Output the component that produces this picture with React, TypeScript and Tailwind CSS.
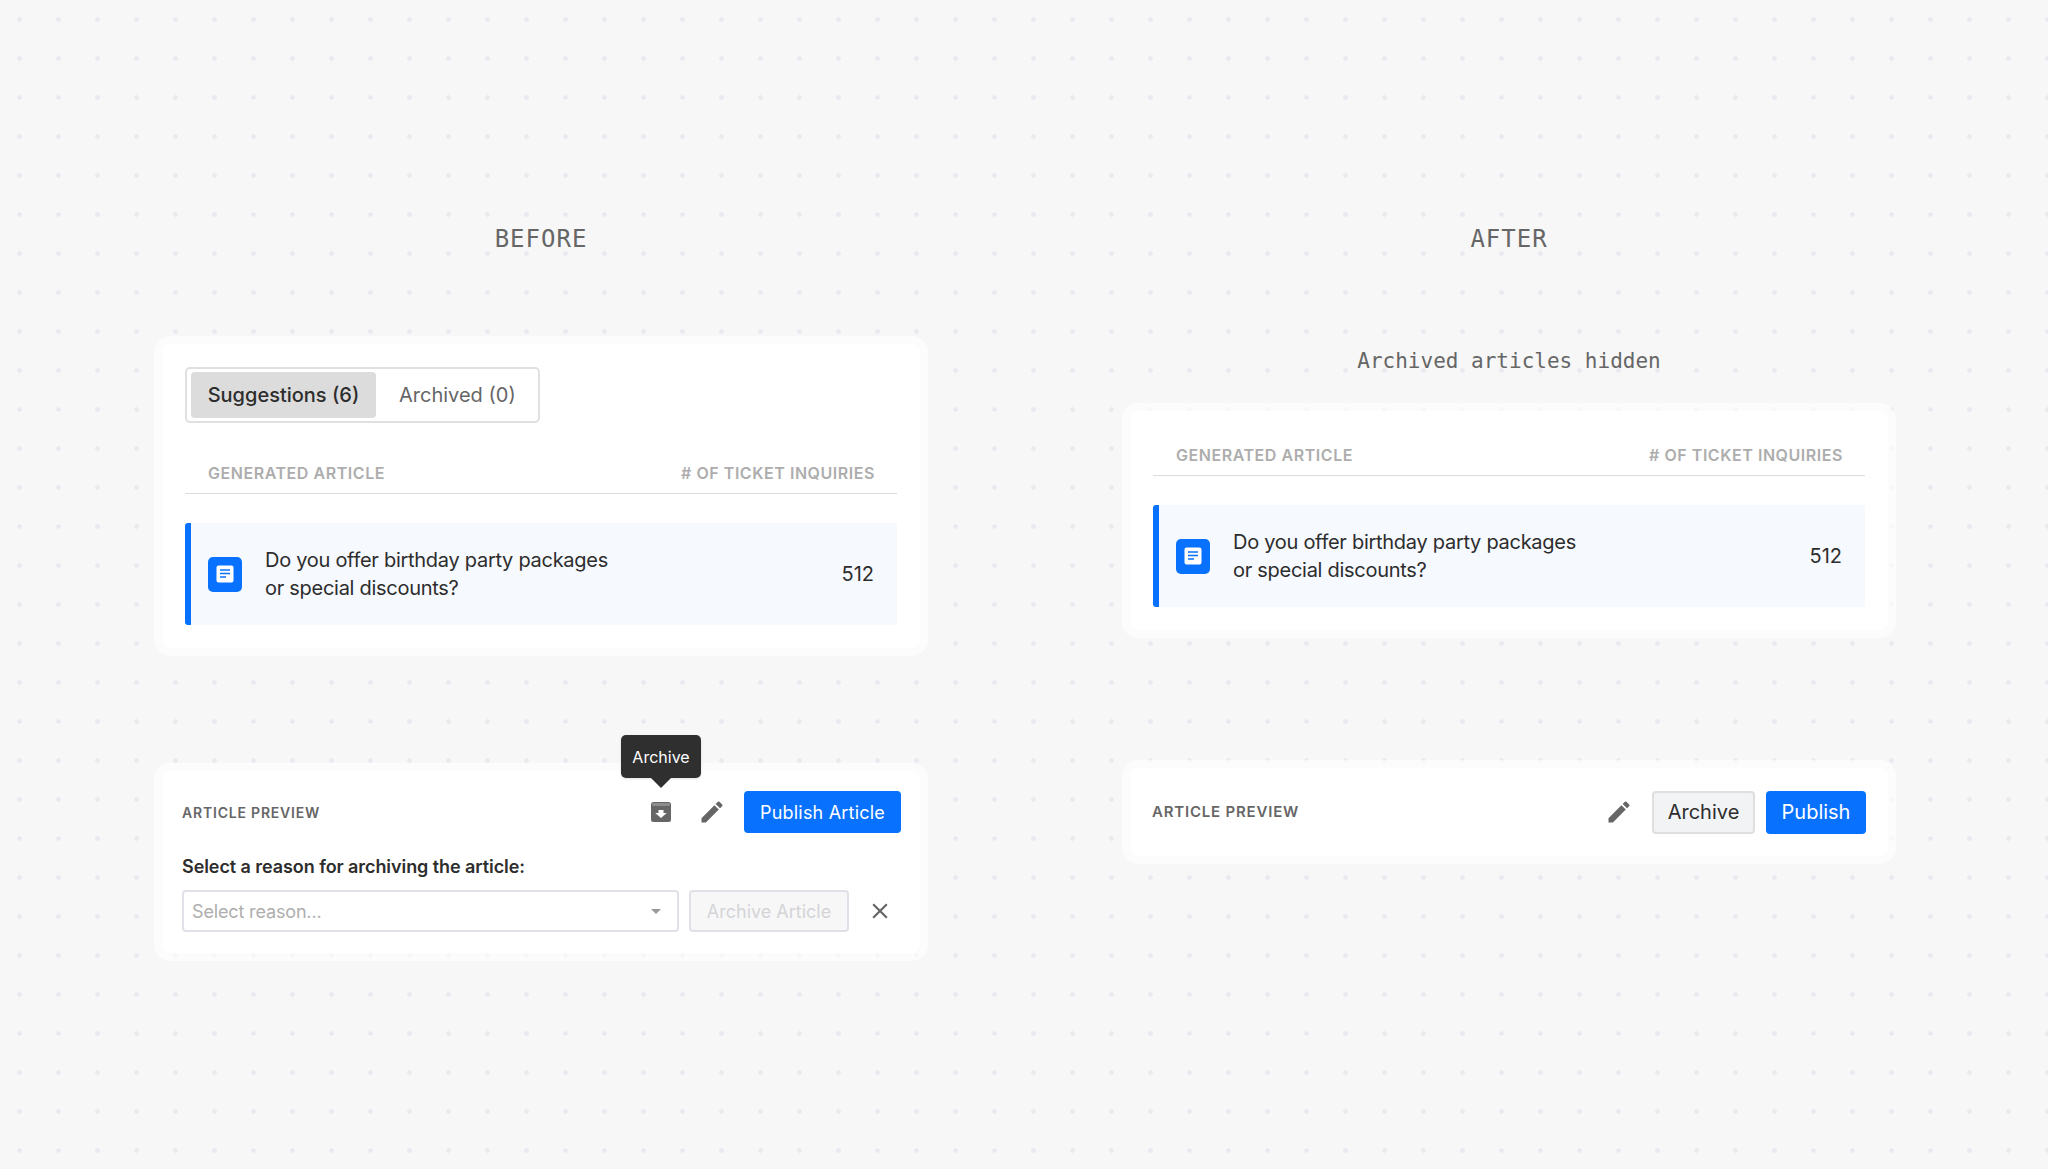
import React from 'react';
import { MdEdit, MdClose } from 'react-icons/md';

const DocIcon: React.FC = () => (
  <div className="flex h-[35px] w-[34px] shrink-0 items-center justify-center rounded-[5px] bg-[#0872ff]">
    <svg width="18" height="18" viewBox="0 0 18 18">
      <rect x="0.5" y="0.5" width="17" height="17" rx="2" fill="#fff" />
      <path d="M4 5h10M4 8.500h10M4 12h6" stroke="#0872ff" strokeWidth="1.7" fill="none" />
    </svg>
  </div>
);

const ArchiveIcon: React.FC = () => (
  <svg width="20" height="20" viewBox="0 0 20 20" className="shrink-0">
    <rect x="0" y="0" width="20" height="20" rx="2.500" fill="#666" />
    <rect x="1" y="1" width="18" height="3" rx="1" fill="#8c8c8c" />
    <path d="M7.500 8h5v3h3.200L10 16 4.300 11h3.200z" fill="#fff" />
  </svg>
);

const TableHeader: React.FC = () => (
  <div className="flex h-[41px] items-center justify-between border-b border-[#dcdcdc] pl-[23px] pr-[22px] text-[16px] font-semibold tracking-[0.55px] text-[#adadad]">
    <span>GENERATED ARTICLE</span>
    <span># OF TICKET INQUIRIES</span>
  </div>
);

const ArticleRow: React.FC = () => (
  <div className="mt-[29px] flex h-[102px] items-center rounded-l-[3px] border-l-[6px] border-[#0872ff] bg-[#f6f9fe] pl-[17px] pr-[23px]">
    <DocIcon />
    <div className="ml-[23px] flex-1 text-[20px] leading-[28.500px] tracking-[-0.28px] text-[#2d2d2d]">
      Do you offer birthday party packages
      <br />
      or special discounts?
    </div>
    <span className="text-[20px] text-[#2d2d2d]">512</span>
  </div>
);

const Card: React.FC<{ className?: string; children: React.ReactNode }> = ({ className, children }) => (
  <div className={`rounded-[16px] border-8 border-white/60 bg-white bg-clip-padding ${className ?? ''}`}>{children}</div>
);

const Before: React.FC = () => (
  <div className="flex w-[774px] flex-col">
    <div className="h-8 text-center font-['DejaVu_Sans_Mono',monospace] text-[24px] leading-8 tracking-[1px] text-[#666]">BEFORE</div>

    <Card className="mt-[81px] p-[23px]">
      <div className="flex h-14 w-[355px] items-center gap-[6px] rounded-[5px] border-2 border-[#e0e0e0] p-[4px] text-[20px]">
        <div className="flex h-[46px] w-[185px] items-center justify-center rounded-[4px] bg-[#dcdcdc] font-medium text-[#2d2d2d]">Suggestions (6)</div>
        <div className="px-[17px] text-[#666]">Archived (0)</div>
      </div>
      <div className="mt-[30px]">
        <TableHeader />
      </div>
      <ArticleRow />
    </Card>

    <Card className="mt-[107px] pb-[21px] pl-5 pr-[19px] pt-5">
      <div className="flex h-[42px] items-center">
        <span className="text-[14px] font-semibold tracking-[0.8px] text-[#666]">ARTICLE PREVIEW</span>
        <div className="relative ml-auto flex items-center">
          <div className="relative">
            <ArchiveIcon />
            <div className="absolute bottom-[44px] left-1/2 flex h-[43px] w-20 -translate-x-1/2 items-center justify-center rounded-[5px] bg-[#2f2f2f] text-[16px] text-white shadow-sm">
              Archive
              <div className="absolute -bottom-[10px] left-1/2 h-0 w-0 -translate-x-1/2 border-x-[10px] border-t-[10px] border-x-transparent border-t-[#2f2f2f]" />
            </div>
          </div>
          <MdEdit size={28} className="ml-[27px] text-[#666]" />
          <button className="ml-[18px] h-[42px] w-[157px] rounded-[4px] bg-[#0872ff] text-[18px] tracking-[0.2px] text-white">Publish Article</button>
        </div>
      </div>
      <div className="mt-[20px] text-[18px] font-semibold leading-[27px] tracking-[-0.07px] text-[#2d2d2d]">Select a reason for archiving the article:</div>
      <div className="mt-[10px] flex items-center">
        <div className="flex h-[42px] w-[497px] items-center justify-between rounded-[4px] border-2 border-[#e0e0e8] pl-2 pr-4 text-[18px] tracking-[-0.15px] text-[#aeaeae]">
          <span>Select reason...</span>
          <div className="h-0 w-0 border-x-[5px] border-t-[5px] border-x-transparent border-t-[#999]" />
        </div>
        <button className="ml-[10px] h-[42px] w-[160px] rounded-[4px] border-2 border-[#e0e0e8] bg-[#f7f7f7] text-[18px] text-[#d4d4d8]">Archive Article</button>
        <MdClose size={26} className="ml-[18px] text-[#666]" />
      </div>
    </Card>
  </div>
);

const After: React.FC = () => (
  <div className="flex w-[774px] flex-col">
    <div className="h-8 text-center font-['DejaVu_Sans_Mono',monospace] text-[24px] leading-8 tracking-[1px] text-[#666]">AFTER</div>
    <div className="mt-[92px] h-7 text-center font-['DejaVu_Sans_Mono',monospace] text-[21px] leading-7 text-[#666]">Archived articles hidden</div>

    <Card className="mt-[28px] p-[23px] pt-[24px]">
      <TableHeader />
      <ArticleRow />
    </Card>

    <Card className="mt-[122px] px-[22px] py-[23px]">
      <div className="flex h-[42px] items-center">
        <span className="text-[15px] font-semibold tracking-[0.8px] text-[#666]">ARTICLE PREVIEW</span>
        <div className="ml-auto flex items-center">
          <MdEdit size={28} className="text-[#666]" />
          <button className="ml-[19px] h-[43px] w-[103px] rounded-[4px] border-2 border-[#dfdfdf] bg-[#f2f3f5] text-[20px] text-[#2d2d2d]">Archive</button>
          <button className="ml-[11px] h-[43px] w-[100px] rounded-[4px] bg-[#0872ff] text-[20px] text-white">Publish</button>
        </div>
      </div>
    </Card>
  </div>
);

const App: React.FC = () => (
  <div className="flex min-h-[1169px] gap-[194px] bg-[#f7f7f7] bg-[radial-gradient(circle,#e9eaf0_2px,transparent_2.500px)] bg-[length:39px_39px] pl-[154px] pt-[223px] font-['Inter',sans-serif]">
    <Before />
    <After />
  </div>
);

export default App;
